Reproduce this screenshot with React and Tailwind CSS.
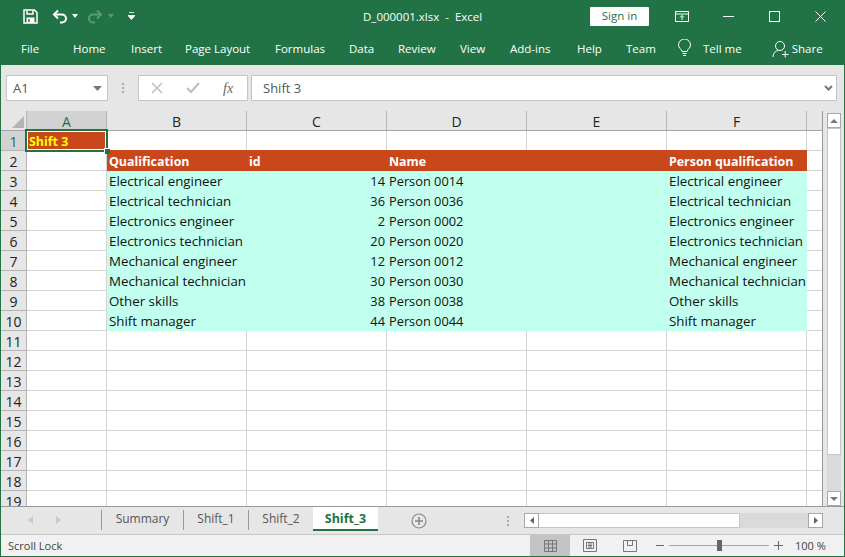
import React from "react";

const UI = { fontFamily: '"Open Sans","Noto Sans",sans-serif' };

const rows = [
  ["Electrical engineer", "14", "Person 0014"],
  ["Electrical technician", "36", "Person 0036"],
  ["Electronics engineer", "2", "Person 0002"],
  ["Electronics technician", "20", "Person 0020"],
  ["Mechanical engineer", "12", "Person 0012"],
  ["Mechanical technician", "30", "Person 0030"],
  ["Other skills", "38", "Person 0038"],
  ["Shift manager", "44", "Person 0044"],
];

const gridCell = "h-full shrink-0 border-r border-b border-[#d4d4d4] whitespace-nowrap";

function RowHead({ n, active }) {
  return (
    <div className={`w-[26px] h-full shrink-0 flex items-center justify-center pt-[1px] border-r border-b border-[#b5b5b5] text-[14px] ${active ? "bg-[#d2d2d2] text-[#1f6e45]" : "bg-[#e6e6e6] text-[#222]"}`}>
      {n}
    </div>
  );
}

function SheetRow({ n, a, children, active }) {
  return (
    <div className="flex h-[20px] shrink-0">
      <RowHead n={n} active={active} />
      {children || (
        <>
          <div className={`${gridCell} w-[80px]`}>{a}</div>
          <div className={`${gridCell} w-[140px]`} />
          <div className={`${gridCell} w-[140px]`} />
          <div className={`${gridCell} w-[140px]`} />
          <div className={`${gridCell} w-[140px]`} />
          <div className={`${gridCell} w-[140px]`} />
          <div className="h-full w-[15px] shrink-0 border-b border-[#d4d4d4]" />
        </>
      )}
    </div>
  );
}

function DataRow({ n, data }) {
  const c = "h-full shrink-0 bg-[#c1ffee] leading-[20px] text-[#111] whitespace-nowrap overflow-hidden";
  return (
    <SheetRow n={n}>
      <div className={`${gridCell} w-[80px]`} />
      <div className={`${c} w-[140px] pl-[2px] text-[13.3px]`}>{data[0]}</div>
      <div className={`${c} w-[140px] pr-[2px] text-right text-[12.8px]`}>{data[1]}</div>
      <div className={`${c} w-[140px] pl-[2px] text-[12.8px]`}>{data[2]}</div>
      <div className={`${c} w-[140px]`} />
      <div className={`${c} w-[140px] pl-[2px] text-[13.3px]`}>{data[0]}</div>
      <div className="h-full w-[15px] shrink-0 border-b border-[#d4d4d4]" />
    </SheetRow>
  );
}

function ColHead({ w, label, active }) {
  return (
    <div className={`h-full shrink-0 flex items-center justify-center pt-[1px] border-r border-[#b5b5b5] text-[14px] ${w} ${active ? "bg-[#d2d2d2] text-[#1f6e45]" : "text-[#222]"}`}>
      {label}
    </div>
  );
}

function Tab({ children }) {
  return <span className="text-white text-[11.5px] leading-[16px] whitespace-nowrap">{children}</span>;
}

function SheetTab({ children, w, sep }) {
  return (
    <div className={`h-[20px] self-start mt-[3px] pb-[2px] flex items-center justify-center text-[12px] text-[#555] shrink-0 ${sep ? "border-r border-[#9a9a9a]" : ""} ${w}`}>
      {children}
    </div>
  );
}

export default function App() {
  const navTabs = [
    ["File", "w-[52px]"],
    ["Home", "w-[58px]"],
    ["Insert", "w-[54px]"],
    ["Page Layout", "w-[90px]"],
    ["Formulas", "w-[74px]"],
    ["Data", "w-[49px]"],
    ["Review", "w-[62px]"],
    ["View", "w-[50px]"],
    ["Add-ins", "w-[67px]"],
    ["Help", "w-[49px]"],
    ["Team", "w-[52px]"],
  ];
  return (
    <div style={UI} className="w-[845px] h-[557px] bg-[#e6e6e6] flex flex-col overflow-hidden border-x border-b border-[#217346]">
      {/* Title bar */}
      <div className="h-[32px] shrink-0 bg-[#217346] flex items-center text-white -mx-px">
        <div className="w-[23px]" />
        <svg width="15" height="15" viewBox="0 0 15 15" fill="none" stroke="white" strokeWidth="1.5">
          <path d="M1 1h10.5L14 3.5V14H1z" />
          <path d="M4 1.5v3.5h6V1.5" />
          <path d="M3.500 14V8.500h8V14z" fill="white" stroke="none" />
          <path d="M6 10v3" stroke="#217346" strokeWidth="1.5" />
        </svg>
        <div className="w-[14px]" />
        <svg width="15" height="15" viewBox="0 0 15 15" fill="none" stroke="white" strokeWidth="2">
          <path d="M6 1.500 2 5.500l4 4" />
          <path d="M2.500 5.500H10a4 4 0 0 1 0 8H8" />
        </svg>
        <svg width="6" height="4" viewBox="0 0 6 4" className="ml-[5px]"><path d="M0 0h6L3 4z" fill="white" /></svg>
        <div className="w-[10px]" />
        <svg width="15" height="15" viewBox="0 0 15 15" fill="none" stroke="#5b9a78" strokeWidth="2">
          <path d="M9 1.500l4 4-4 4" />
          <path d="M12.500 5.500H5a4 4 0 0 0 0 8h2" />
        </svg>
        <svg width="6" height="4" viewBox="0 0 6 4" className="ml-[5px]"><path d="M0 0h6L3 4z" fill="#5b9a78" /></svg>
        <div className="w-[14px]" />
        <svg width="7" height="8" viewBox="0 0 7 8"><path d="M1 0.500h5M0 3.500h7L3.500 7.500z" fill="white" stroke="white" strokeWidth="0.8" /></svg>
        <div className="flex-1 text-left text-[11.5px] pl-[228px] pt-[1px] whitespace-pre">D_000001.xlsx  -  Excel</div>
        <div className="w-[59px] h-[19px] bg-white text-[#217346] text-[11.5px] flex items-center justify-center rounded-[1px] mr-[26px]">Sign in</div>
        <svg width="14" height="11" viewBox="0 0 14 11" fill="none" stroke="white"><path d="M.5.500h13v10H.5zM.5 3h13M7 9V4.500M5 6.500l2-2 2 2" /></svg>
        <div className="w-[34px]" />
        <div className="w-[11px] h-px bg-white" />
        <div className="w-[35px]" />
        <div className="w-[11px] h-[11px] border border-white" />
        <div className="w-[35px]" />
        <svg width="11" height="11" viewBox="0 0 11 11" stroke="white"><path d="M.5.500l10 10M10.500.5l-10 10" /></svg>
        <div className="w-[19px]" />
      </div>

      {/* Ribbon tabs */}
      <div className="h-[33px] shrink-0 bg-[#217346] flex items-center -mx-px pl-[21px] pt-[1px]">
        {navTabs.map(([t, c]) => (
          <div key={t} className={`${c} shrink-0 flex items-center`}><Tab>{t}</Tab></div>
        ))}
        <svg width="13" height="18" viewBox="0 0 13 18" fill="none" stroke="white" className="-mt-[2px]">
          <path d="M4 12.500C3.500 10 .5 9 .5 6a6 6 0 0 1 12 0c0 3-3 4-3.500 6.500zM4.500 14.500h4M5 16.500h3" />
        </svg>
        <div className="w-[12px]" />
        <Tab>Tell me</Tab>
        <div className="w-[30px]" />
        <svg width="17" height="18" viewBox="0 0 17 18" fill="none" stroke="white" className="-mt-[1px]">
          <circle cx="8" cy="6" r="4.500" />
          <path d="M1 17c0-4 2.500-6 5-6.500M10 14.500h6.500M13.200 11v6.500" />
        </svg>
        <div className="w-[3px]" />
        <Tab>Share</Tab>
      </div>

      {/* Formula bar */}
      <div className="h-[46px] shrink-0 flex items-start pt-[10px] pl-[5px] pr-[7px]">
        <div className="w-[102px] h-[26px] bg-white border border-[#c6c6c6] flex items-center justify-between pl-[6px] pr-[5px] text-[13px] text-[#555]">
          <span className="pt-[1px]">A1</span>
          <svg width="9" height="5" viewBox="0 0 9 5"><path d="M0 0h9L4.500 5z" fill="#777" /></svg>
        </div>
        <div className="w-[30px] h-[26px] flex flex-col items-center justify-center gap-[2px]">
          <div className="w-[2px] h-[2px] bg-[#aaa]" />
          <div className="w-[2px] h-[2px] bg-[#aaa]" />
          <div className="w-[2px] h-[2px] bg-[#aaa]" />
        </div>
        <div className="w-[110px] h-[26px] bg-white border border-[#c6c6c6] flex items-center pl-[12px]">
          <svg width="12" height="12" viewBox="0 0 12 12" stroke="#bdbdbd" strokeWidth="1.500"><path d="M1 1l10 10M11 1L1 11" /></svg>
          <svg width="14" height="12" viewBox="0 0 14 12" fill="none" stroke="#bdbdbd" strokeWidth="2" className="ml-[23px]"><path d="M1 6l4 4 8-9" /></svg>
          <span className="ml-[23px] text-[14px] italic text-[#666]" style={{ fontFamily: '"Liberation Serif",serif' }}>fx</span>
        </div>
        <div className="w-[3px]" />
        <div className="flex-1 h-[26px] bg-white border border-[#c6c6c6] flex items-center justify-between pl-[11px] pr-[3px] text-[13px] text-[#555]">
          <span className="pt-[1px]">Shift 3</span>
          <svg width="9" height="6" viewBox="0 0 9 6" fill="none" stroke="#777" strokeWidth="2"><path d="M1 1l3.500 3.500L8 1" /></svg>
        </div>
      </div>

      {/* Sheet + scrollbar */}
      <div className="flex-1 min-h-0 flex">
        <div className="w-[822px] shrink-0 flex flex-col min-h-0 border-r border-[#9a9a9a] overflow-hidden">
          {/* Column header */}
          <div className="h-[19px] shrink-0 flex border-b-2 border-[#a5a5a5] box-content -mb-px">
            <div className="w-[26px] h-full shrink-0 border-r border-[#b5b5b5] flex items-end justify-end pr-[2px] pb-[2px]">
              <svg width="12" height="12" viewBox="0 0 12 12"><path d="M12 0v12H0z" fill="#b4b4b4" /></svg>
            </div>
            <ColHead w="w-[80px]" label="A" active />
            <ColHead w="w-[140px]" label="B" />
            <ColHead w="w-[140px]" label="C" />
            <ColHead w="w-[140px]" label="D" />
            <ColHead w="w-[140px]" label="E" />
            <ColHead w="w-[140px]" label="F" />
          </div>
          {/* Rows */}
          <div className="flex-1 min-h-0 bg-white relative">
            <SheetRow n={1} active a={
              <div className="h-full bg-[#c9481b] text-[#ffff00] font-bold text-[12.4px] leading-[21px] pl-[2px]">Shift 3</div>
            } />
            <SheetRow n={2}>
              <div className={`${gridCell} w-[80px]`} />
              {["Qualification", "id", "Name", "", "Person qualification"].map((t, i) => (
                <div key={i} className="h-[21px] -mt-px w-[140px] shrink-0 bg-[#c9481b] text-white font-bold text-[12.4px] leading-[23px] pl-[2px] whitespace-nowrap overflow-hidden">{t}</div>
              ))}
              <div className="h-full w-[15px] shrink-0 border-b border-[#d4d4d4]" />
            </SheetRow>
            {rows.map((r, i) => <DataRow key={i} n={i + 3} data={r} />)}
            {Array.from({ length: 9 }, (_, i) => <SheetRow key={i} n={i + 11} />)}
            {/* Selection */}
            <div className="absolute left-[24px] top-[-2px] w-[83px] h-[23px] border-2 border-[#217346] shadow-[inset_0_0_0_1px_white] pointer-events-none" />
            <div className="absolute left-[103px] top-[17px] w-[6px] h-[6px] bg-[#217346] border-l border-t border-white pointer-events-none" />
          </div>
        </div>
        {/* Vertical scrollbar */}
        <div className="w-[14px] ml-[4px] shrink-0 flex flex-col">
          <div className="h-[15px] bg-white border border-[#a8a8a8] flex items-center justify-center mt-[2px]">
            <svg width="8" height="4" viewBox="0 0 8 4"><path d="M0 4h8L4 0z" fill="#777" /></svg>
          </div>
          <div className="h-[327px] bg-white border border-[#c6c6c6]" />
          <div className="flex-1 bg-[#dadada]" />
          <div className="h-[15px] bg-white border border-[#a8a8a8] flex items-center justify-center">
            <svg width="8" height="4" viewBox="0 0 8 4"><path d="M0 0h8L4 4z" fill="#777" /></svg>
          </div>
        </div>
      </div>

      {/* Sheet tabs */}
      <div className="h-[29px] shrink-0 flex items-center border-t border-[#9a9a9a] border-b-[#c6c6c6] border-b">
        <div className="w-[101px] h-[20px] self-start mt-[3px] shrink-0 flex items-center border-r border-[#9a9a9a] pl-[27px] gap-[23px]">
          <svg width="5" height="8" viewBox="0 0 5 8"><path d="M5 0v8L0 4z" fill="#c9c9c9" /></svg>
          <svg width="5" height="8" viewBox="0 0 5 8"><path d="M0 0v8l5-4z" fill="#c9c9c9" /></svg>
        </div>
        <SheetTab w="w-[82px]" sep>Summary</SheetTab>
        <SheetTab w="w-[65px]" sep>Shift_1</SheetTab>
        <SheetTab w="w-[64px]">Shift_2</SheetTab>
        <div className="w-[65px] h-[24px] self-start shrink-0 bg-white border-b-2 border-[#217346] flex items-center justify-center text-[12.5px] font-bold text-[#217346] pt-[2px]">Shift_3</div>
        <svg width="16" height="16" viewBox="0 0 16 16" fill="none" stroke="#8a8a8a" strokeWidth="1.200" className="ml-[33px]">
          <circle cx="8" cy="8" r="7" />
          <path d="M8 4v8M4 8h8" strokeWidth="1.600" />
        </svg>
        <div className="w-[80px]" />
        <div className="flex flex-col gap-[2px]">
          <div className="w-[2px] h-[2px] bg-[#aaa]" />
          <div className="w-[2px] h-[2px] bg-[#aaa]" />
          <div className="w-[2px] h-[2px] bg-[#aaa]" />
        </div>
        <div className="w-[15px]" />
        <div className="w-[299px] h-[15px] flex shrink-0">
          <div className="w-[15px] h-full bg-white border border-[#a8a8a8] flex items-center justify-center">
            <svg width="4" height="7" viewBox="0 0 4 7"><path d="M4 0v7L0 3.500z" fill="#666" /></svg>
          </div>
          <div className="w-[201px] h-full bg-white border-y border-r border-[#c6c6c6]" />
          <div className="flex-1 h-full bg-[#dadada]" />
          <div className="w-[15px] h-full bg-white border border-[#a8a8a8] flex items-center justify-center">
            <svg width="4" height="7" viewBox="0 0 4 7"><path d="M0 0v7l4-3.500z" fill="#666" /></svg>
          </div>
        </div>
      </div>

      {/* Status bar */}
      <div className="h-[21px] shrink-0 bg-[#f1f1f1] flex items-center pl-[7px] text-[11px] text-[#444]">
        <span className="w-[522px] shrink-0 pt-[1px]">Scroll Lock</span>
        <div className="w-[40px] h-full bg-[#c4c4c4] flex items-center justify-center">
          <svg width="13" height="12" viewBox="0 0 13 12" fill="none" stroke="#777"><path d="M.5.500h12v11H.5zM.5 4h12M.5 8h12M4.500.5v11M8.500.5v11" /></svg>
        </div>
        <div className="w-[40px] h-full flex items-center justify-center">
          <svg width="14" height="13" viewBox="0 0 14 13" fill="none" stroke="#777"><path d="M.5.500h13v12H.5zM3.500 3.500h7v6h-7zM5 5h4M5 6.500h4M5 8h4" /></svg>
        </div>
        <div className="w-[40px] h-full flex items-center justify-center">
          <svg width="14" height="12" viewBox="0 0 14 12" fill="none" stroke="#777"><path d="M.5.500h13v11H.5zM4.500.5v5h5v-5" /></svg>
        </div>
        <div className="w-[8px] h-px bg-[#666] ml-[6px]" />
        <div className="w-[100px] h-px bg-[#a8a8a8] ml-[5px] relative">
          <div className="absolute left-[48px] -top-[5px] w-[5px] h-[11px] bg-[#666]" />
        </div>
        <svg width="9" height="9" viewBox="0 0 9 9" stroke="#666" className="ml-[5px]"><path d="M0 4.500h9M4.500 0v9" /></svg>
        <span className="ml-[12px] text-[11px] whitespace-nowrap pt-[1px]">100 %</span>
      </div>
    </div>
  );
}
